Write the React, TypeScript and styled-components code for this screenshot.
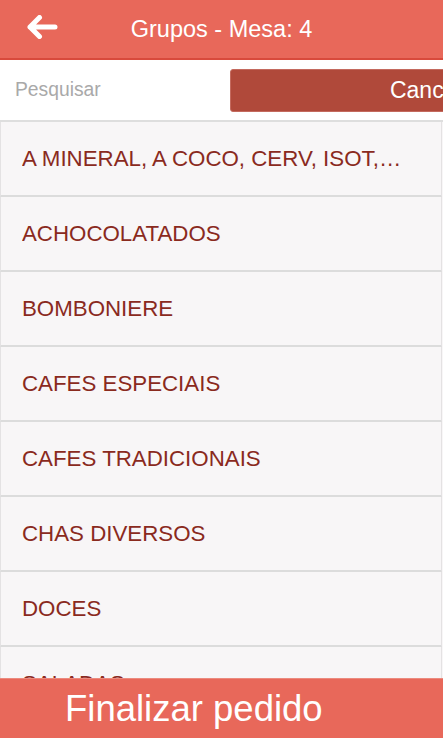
import React from 'react'
import styled, { createGlobalStyle } from 'styled-components'

const groups = [
  'A MINERAL, A COCO, CERV, ISOT,REFRIGERANTES',
  'ACHOCOLATADOS',
  'BOMBONIERE',
  'CAFES ESPECIAIS',
  'CAFES TRADICIONAIS',
  'CHAS DIVERSOS',
  'DOCES',
  'SALADAS',
  'SALGADOS',
]

const GlobalStyle = createGlobalStyle`
  html, body {
    margin: 0;
    padding: 0;
    background: #f8f6f7;
    font-family: "Liberation Sans", Arial, sans-serif;
    overflow: hidden;
  }
`

const App = () => {
  return (
    <Page>
      <GlobalStyle />
      <Header>
        <BackButton aria-label='voltar'>
          <svg width='32' height='24' viewBox='0 0 32 24' fill='none'>
            <path
              d='M29 12H4M13.5 2.5L4 12l9.5 9.5'
              stroke='#fff'
              strokeWidth='5'
              strokeLinecap='round'
              strokeLinejoin='round'
            />
          </svg>
        </BackButton>
        <Title>Grupos - Mesa: 4</Title>
      </Header>

      <SearchBar>
        <SearchInput placeholder='Pesquisar' />
        <CancelButton>Cancelar</CancelButton>
      </SearchBar>

      <List>
        {groups.map((g) => (
          <Item key={g}>
            <ItemText>{g}</ItemText>
          </Item>
        ))}
      </List>

      <Footer>Finalizar pedido</Footer>
    </Page>
  )
}

const Page = styled.main`
  width: 443px;
  height: 738px;
  overflow: hidden;
  background: #f8f6f7;
`

const Header = styled.header`
  position: relative;
  height: 58px;
  background: #e8685a;
  border-bottom: 2px solid #d84a3c;
  display: flex;
  align-items: center;
  justify-content: center;
`

const BackButton = styled.button`
  position: absolute;
  left: 26px;
  top: 15px;
  padding: 0;
  border: 0;
  background: none;
  display: flex;
`

const Title = styled.h1`
  margin: 0;
  font-size: 23.5px;
  font-weight: normal;
  color: #fff;
`

const SearchBar = styled.div`
  height: 60px;
  background: #fff;
  border-bottom: 2px solid #dedede;
  display: flex;
  align-items: center;
  overflow: hidden;
`

const SearchInput = styled.input`
  width: 215px;
  flex-shrink: 0;
  margin-left: 15px;
  border: 0;
  outline: none;
  font-family: inherit;
  font-size: 19.3px;
  color: #555;
  background: transparent;
  padding: 0;

  &::placeholder {
    color: #a9a9a9;
  }
`

const CancelButton = styled.button`
  flex-shrink: 0;
  width: 412px;
  height: 43px;
  margin-top: 1px;
  border: 1px solid #c46a5e;
  border-radius: 3px;
  background: #b0493a;
  color: #fff;
  font-family: inherit;
  font-size: 23px;
  padding: 0;
`

const List = styled.ul`
  list-style: none;
  margin: 0;
  padding: 0;
`

const Item = styled.li`
  height: 73px;
  border-bottom: 2px solid #dcdcdc;
  border-left: 1px solid #e4e2e3;
  border-right: 1px solid #e4e2e3;
  margin-right: 1px;
  background: #f8f6f7;
  display: flex;
  align-items: center;
  padding: 0 36px 0 21px;
`

const ItemText = styled.span`
  font-size: 22.3px;
  color: #8a2a1e;
  white-space: nowrap;
  overflow: hidden;
  text-overflow: ellipsis;
`

const Footer = styled.footer`
  position: fixed;
  left: 0;
  bottom: 0;
  width: 443px;
  height: 60px;
  box-sizing: border-box;
  border-top: 1px solid #ec8a7e;
  background: #e8685a;
  color: #fff;
  font-size: 36.5px;
  display: flex;
  align-items: center;
  padding-left: 65px;
`

export default App
